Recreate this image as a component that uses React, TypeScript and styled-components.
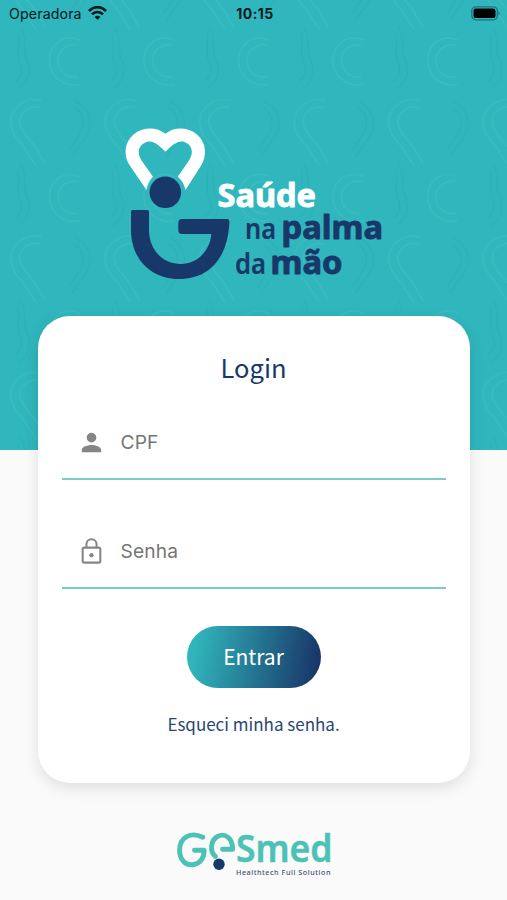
import React from 'react';
import styled, { createGlobalStyle } from 'styled-components';

const teal = '#30b6bd';
const navy = '#19386a';
const mint = '#4cc2b7';

const GlobalStyle = createGlobalStyle`
  *, *::before, *::after { box-sizing: border-box; }
  body { margin: 0; background: #fafafa; }
`;

const Screen = styled.main`
  position: relative;
  display: flex;
  flex-direction: column;
  align-items: center;
  width: 507px;
  height: 900px;
  overflow: hidden;
  background: #fafafa;
  font-family: 'Noto Sans CJK JP', 'Noto Sans', sans-serif;
  color: ${navy};
`;

const Backdrop = styled.svg`
  position: absolute;
  top: 0;
  left: 0;
  width: 100%;
  height: 450px;
  background: ${teal};
`;

const StatusBar = styled.header`
  position: relative;
  display: grid;
  grid-template-columns: 1fr auto 1fr;
  align-items: center;
  width: 100%;
  height: 28px;
  padding: 0 6px 2px 9px;
  font-family: Inter, sans-serif;
  color: #06191b;
`;

const Carrier = styled.div`
  display: flex;
  align-items: center;
  gap: 6px;
  font-size: 14.2px;
  letter-spacing: 0.12px;
`;

const Clock = styled.div`
  font-size: 14px;
  font-weight: 700;
  letter-spacing: 0.5px;
`;

const BatteryIcon = styled.svg`
  justify-self: end;
`;

const BrandLogo = styled.svg`
  position: relative;
  display: block;
  margin-top: 92px;
  width: 507px;
  height: 170px;
  flex: none;
`;

const LogoText = styled.text`
  font-family: 'Noto Sans', sans-serif;
  stroke-linejoin: round;
  paint-order: stroke;
`;

const Card = styled.form`
  position: relative;
  display: flex;
  flex-direction: column;
  align-items: center;
  width: 432px;
  height: 467px;
  margin-top: 26px;
  padding: 32px 24px 0;
  border-radius: 32px;
  background: #fff;
  box-shadow: 0 5px 16px rgba(0, 0, 0, 0.11);
`;

const Title = styled.h1`
  margin: 0;
  height: 38px;
  line-height: 38px;
  font-size: 25.5px;
  font-weight: 400;
`;

const Field = styled.label<{ $gap: number }>`
  display: flex;
  align-items: center;
  gap: 15px;
  width: 384px;
  height: 75px;
  margin-top: ${(p) => p.$gap}px;
  padding: 1px 15px 0;
  border-bottom: 2px solid #7ccbc9;
  color: #858585;
`;

const Input = styled.input`
  flex: 1;
  min-width: 0;
  padding: 0;
  border: 0;
  outline: 0;
  background: transparent;
  font-family: Inter, sans-serif;
  font-size: 19.2px;
  letter-spacing: 0.15px;
  color: #444;
  &::placeholder { color: #757575; opacity: 1; }
`;

const SubmitButton = styled.button`
  width: 134px;
  height: 62px;
  margin-top: 37px;
  padding: 0 0 3px;
  border: 0;
  border-radius: 31px;
  background: linear-gradient(100deg, #30b5bb 8%, ${navy} 94%);
  color: #fff;
  font-family: inherit;
  font-size: 21px;
`;

const ForgotLink = styled.a`
  margin-top: 22px;
  height: 28px;
  line-height: 28px;
  font-size: 17px;
  white-space: nowrap;
  color: #2a4674;
`;

const FooterLogo = styled.svg`
  display: block;
  width: 160px;
  height: 60px;
  margin-top: 37px;
  flex: none;
  overflow: visible;
`;

function HeartPattern() {
  return (
    <Backdrop aria-hidden="true">
      <defs>
        <g id="motif" fill="none" strokeWidth="1.200">
          <g stroke="#59c9cf" strokeOpacity=".34">
            <path d="M42 101C27 95 8 109 11 125C13 139 23 143 28 154L36 166" />
            <path d="M41 108C29 104 18 114 20 124C22 135 34 142 38 152L45 164" />
            <path d="M80 40C62 33 49 46 49.500 61C50 77 65 88 80 84" />
            <path d="M78 45C67 43 57 51 58 62C59 73 68 78 78 77" />
          </g>
          <g stroke="#249fa8" strokeOpacity=".28">
            <path d="M75 101C93 110 94 128 82 142L72 157" />
            <path d="M74 108C85 113 85 127 79 135L69 150" />
            <path d="M20 27C28 37 22 51 27 60C33 72 27 84 18 89" />
            <path d="M18 34C20 43 16 54 20 63C24 71 21 77 16 81" />
          </g>
        </g>
        <pattern id="hearts" width="94.5" height="136.5" patternUnits="userSpaceOnUse">
          <use href="#motif" />
          <use href="#motif" y="-136.5" />
        </pattern>
      </defs>
      <rect width="507" height="450" fill="url(#hearts)" />
    </Backdrop>
  );
}

function WifiIcon() {
  return (
    <svg width="19" height="14" viewBox="0 0 19 14" fill="none" stroke="currentColor" strokeWidth="2.7">
      <path d="M1 5C6-.2 13-.2 18 5" />
      <path d="M4 8.400C7.200 5.200 11.800 5.200 15 8.400" />
      <path d="M9.500 13.700L6.600 10.900C8.200 9.300 10.800 9.300 12.400 10.900Z" fill="currentColor" stroke="none" />
    </svg>
  );
}

function PalmLogo() {
  return (
    <BrandLogo viewBox="0 120 507 170" role="img" aria-label="Saúde na palma da mão">
      <path
        fill="#fff"
        d="M165.400 133.800C174 126.500 188 127 197 134.500C206.500 142.500 207.500 156 200.500 166.500L185.500 190Q183.500 181 177.700 176.700L189 160.500C194.500 152 191.500 144.500 184.500 142C178 140 173 144.500 165.400 151.700C158 144.500 153 140 146.500 142C139 144.500 136 152 141.500 160.500L153 176.700Q148 181 146.500 190L130.500 166.500C123 156 124 142.500 133.500 134.500C142.500 127 156.500 126.500 165.400 133.800Z"
      />
      <circle cx="165.300" cy="192.300" r="15.800" fill={navy} />
      <path
        fill={navy}
        d="M132.500 210H147.500Q149 210 149 212V230C149 249 162 264 181 264C197 264 210 251 211.300 234H182Q178.300 234 178.300 230V223Q178.300 219 182 219H227.500Q229.500 219 229.400 222C228 256 211 279 179 279C150 279 131 258 131 230V212Q131 210 132.500 210Z"
      />
      <LogoText x="217.500" y="206.700" fontSize="32" fontWeight="700" fill="#fff" stroke="#fff" strokeWidth=".9" textLength="98.500" lengthAdjust="spacingAndGlyphs">Saúde</LogoText>
      <g fill={navy} stroke={navy}>
        <LogoText x="245" y="238.500" fontSize="28.500" fontWeight="600" strokeWidth=".2" textLength="31" lengthAdjust="spacingAndGlyphs">na</LogoText>
        <LogoText x="281.500" y="238.500" fontSize="32" fontWeight="700" strokeWidth=".9" textLength="101.500" lengthAdjust="spacingAndGlyphs">palma</LogoText>
        <LogoText x="235" y="274" fontSize="28.500" fontWeight="600" strokeWidth=".2" textLength="31" lengthAdjust="spacingAndGlyphs">da</LogoText>
        <LogoText x="270.500" y="274" fontSize="32" fontWeight="700" strokeWidth=".9" textLength="72" lengthAdjust="spacingAndGlyphs">mão</LogoText>
      </g>
    </BrandLogo>
  );
}

function GesmedLogo() {
  return (
    <FooterLogo viewBox="174 820 160 60" role="img" aria-label="GeSmed Healthtech Full Solution">
      <g fill="none" stroke={mint} strokeWidth="4.900" strokeLinecap="round" strokeLinejoin="round">
        <path d="M202.800 837.200C191 831.500 179.600 837 179.600 850C179.600 861.500 187 866 194 864.500C201 863 204 857.500 204.200 850.300H194.500" />
        <path d="M215.500 856.500C209.500 852 210.500 840 217.500 836.500C225 832.500 232.500 838 232.700 849.200H222.500" />
      </g>
      <circle cx="219" cy="864.300" r="5.700" fill={navy} />
      <LogoText x="236" y="862.300" fontWeight="600" fontSize="38" fill={mint} stroke={mint} strokeWidth=".5" textLength="96.500" lengthAdjust="spacingAndGlyphs">Smed</LogoText>
      <LogoText x="236" y="874.700" fontWeight="500" fontSize="7.200" fill="#3d5078" textLength="94.500">Healthtech Full Solution</LogoText>
    </FooterLogo>
  );
}

export default function App() {
  return (
    <>
      <GlobalStyle />
      <Screen>
        <HeartPattern />
        <StatusBar>
          <Carrier>Operadora <WifiIcon /></Carrier>
          <Clock>10:15</Clock>
          <BatteryIcon width="30" height="15" viewBox="0 0 30 15">
            <rect x=".8" y=".8" width="25.500" height="13" rx="4" fill="none" stroke="#1b747a" strokeWidth="1.300" />
            <rect x="2.500" y="2.500" width="22" height="9.600" rx="2.200" fill="#000" />
            <path d="M27.500 5Q30 7.300 27.500 9.600Z" fill="#1b747a" />
          </BatteryIcon>
        </StatusBar>
        <PalmLogo />
        <Card onSubmit={(e) => e.preventDefault()}>
          <Title>Login</Title>
          <Field $gap={19}>
            <svg width="29" height="29" viewBox="0 0 24 24" fill="currentColor">
              <path d="M12 12a4 4 0 1 0 0-8 4 4 0 0 0 0 8ZM12 14c-2.700 0-8 1.300-8 4v2h16v-2c0-2.700-5.300-4-8-4Z" />
            </svg>
            <Input placeholder="CPF" aria-label="CPF" />
          </Field>
          <Field $gap={34}>
            <svg width="29" height="29" viewBox="0 0 24 24" fill="none" stroke="currentColor" strokeWidth="1.700">
              <rect x="4.700" y="8.800" width="14.600" height="12.400" rx="1.400" />
              <path d="M7.800 8.800V6a4.200 4.200 0 0 1 8.400 0v2.800" />
              <circle cx="12" cy="15" r="1.800" fill="currentColor" stroke="none" />
            </svg>
            <Input type="password" placeholder="Senha" aria-label="Senha" />
          </Field>
          <SubmitButton type="submit">Entrar</SubmitButton>
          <ForgotLink>Esqueci minha senha.</ForgotLink>
        </Card>
        <GesmedLogo />
      </Screen>
    </>
  );
}
